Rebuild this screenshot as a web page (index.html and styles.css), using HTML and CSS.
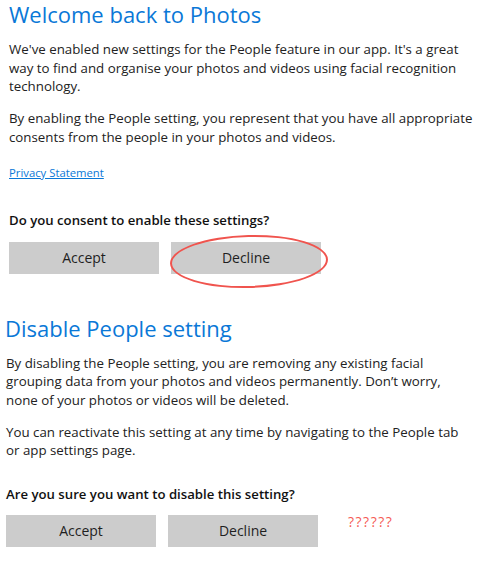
FILE: index.html
```html
<!DOCTYPE html>
<html lang="en">
  <head>
    <meta charset="UTF-8" />
    <title>People setting</title>
    <link rel="stylesheet" href="styles.css">
  </head>
  <body>
    <!-- Enable dialog -->
    <section class="panel panel--enable">
      <h1 class="panel__title">Welcome back to Photos</h1>
      <p class="panel__text">
        We've enabled new settings for the People feature in our app. It's a great<br>
        way to find and organise your photos and videos using facial recognition<br>
        technology.
      </p>
      <p class="panel__text">
        By enabling the People setting, you represent that you have all appropriate<br>
        consents from the people in your photos and videos.
      </p>
      <a class="panel__link" href="#">Privacy Statement</a>
      <p class="panel__question">Do you consent to enable these settings?</p>
      <div class="panel__buttons">
        <button class="btn">Accept</button>
        <span class="circled">
          <button class="btn">Decline</button>
        </span>
      </div>
    </section>

    <!-- Disable dialog -->
    <section class="panel panel--disable">
      <h1 class="panel__title panel__title--tight">Disable People setting</h1>
      <p class="panel__text">
        By disabling the People setting, you are removing any existing facial<br>
        grouping data from your photos and videos permanently. Don’t worry,<br>
        none of your photos or videos will be deleted.
      </p>
      <p class="panel__text">
        You can reactivate this setting at any time by navigating to the People tab<br>
        or app settings page.
      </p>
      <p class="panel__question panel__question--close">Are you sure you want to disable this setting?</p>
      <div class="panel__buttons panel__buttons--close">
        <button class="btn">Accept</button>
        <button class="btn">Decline</button>
        <span class="panel__note">??????</span>
      </div>
    </section>
  </body>
</html>
```

FILE: styles.css
```css
* {
  margin: 0;
  padding: 0;
  box-sizing: border-box;
}

body {
  width: 479px;
  height: 575px;
  overflow: hidden;
  background: #ffffff;
  font-family: "Open Sans", "Noto Sans", sans-serif;
  color: #222222;
}

.panel {
  display: flex;
  flex-direction: column;
  align-items: flex-start;
}

.panel--enable {
  padding-left: 9px;
  height: 313.5px;
}

.panel--disable {
  padding-left: 6px;
}

.panel__title {
  font-weight: 400;
  font-size: 22px;
  line-height: 28px;
  color: #0a78d7;
}

.panel__title--tight {
  margin-left: -1px;
}

.panel__text {
  font-size: 13.3px;
  line-height: 18.5px;
  white-space: nowrap;
  margin-top: 12px;
}

.panel__text + .panel__text {
  margin-top: 13.5px;
}

.panel__link {
  font-size: 11.3px;
  line-height: 16px;
  color: #0a78d7;
  margin-top: 18.5px;
}

.panel__question {
  font-size: 13.2px;
  line-height: 18px;
  font-weight: 600;
  color: #111111;
  margin-top: 30px;
}

.panel__question--close {
  margin-top: 25px;
}

.panel__buttons {
  display: flex;
  gap: 12px;
  margin-top: 13px;
  align-items: flex-start;
}

.panel__buttons--close {
  margin-top: 12px;
}

.btn {
  display: block;
  width: 150px;
  height: 32px;
  border: none;
  background: #cccccc;
  font-family: inherit;
  font-size: 14px;
  color: #1f1f1f;
}

/* red hand-drawn ring round the Decline button */
.circled {
  position: relative;
  display: block;
}

.circled::after {
  content: "";
  position: absolute;
  left: -1px;
  top: -7px;
  width: 154px;
  height: 49px;
  border: 2px solid #f0544e;
  border-radius: 50%;
  transform: rotate(-1.5deg);
}

.panel__note {
  color: #f55b55;
  font-size: 14px;
  line-height: 18px;
  letter-spacing: 1.5px;
  margin-left: 18px;
  margin-top: -2px;
}
```
